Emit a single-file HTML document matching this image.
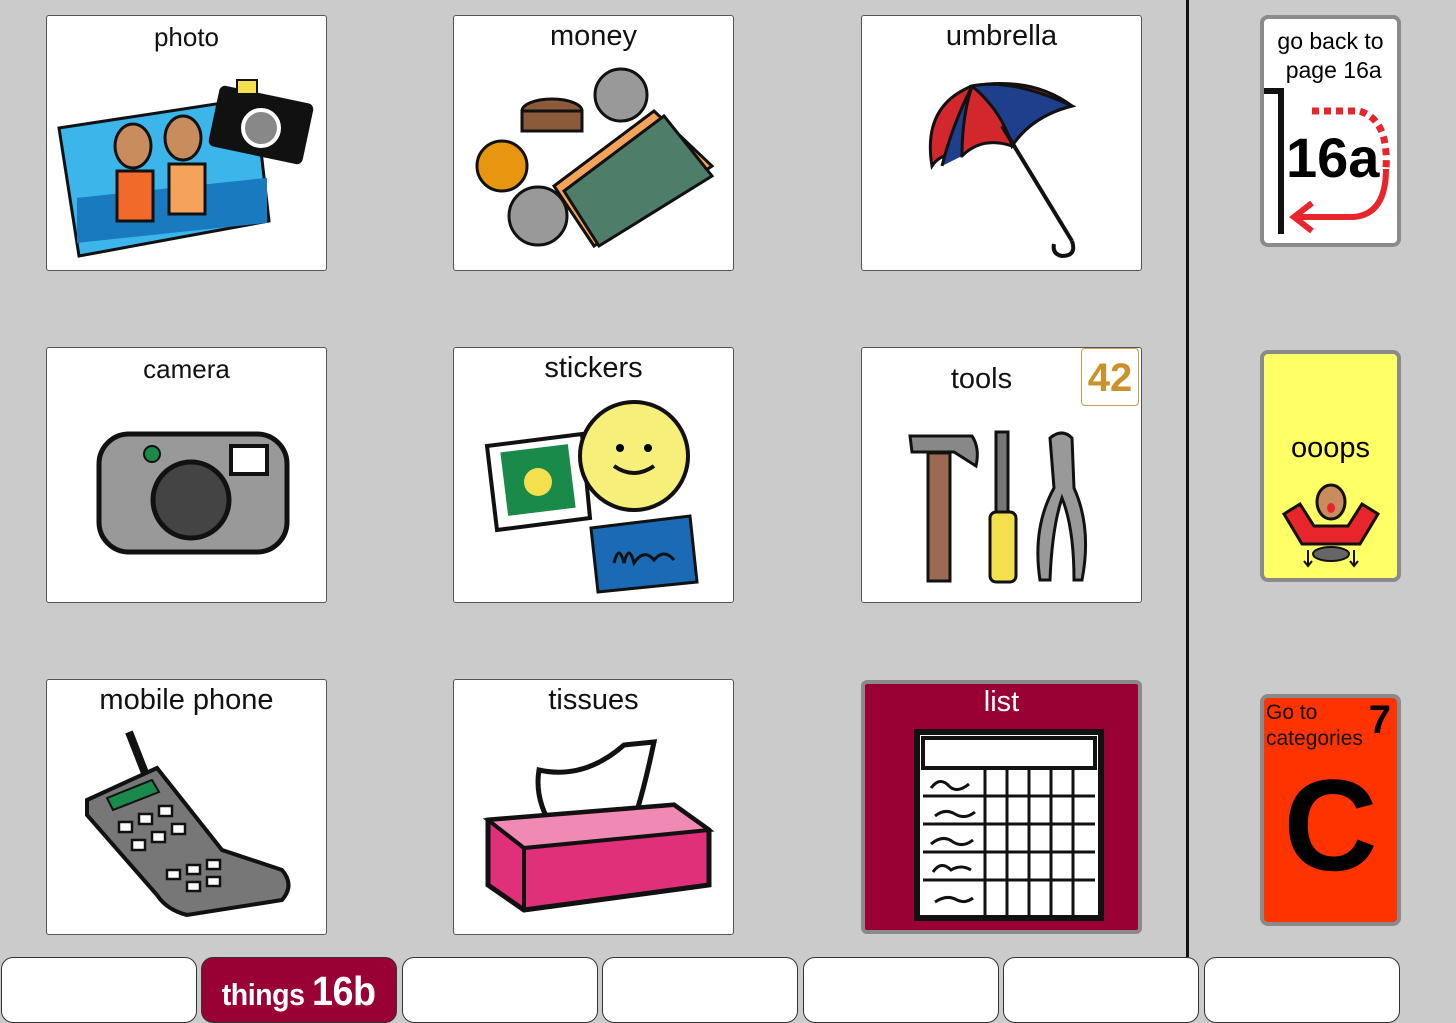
<!DOCTYPE html>
<html><head><meta charset="utf-8"><style>
*{margin:0;padding:0;box-sizing:border-box}
html,body{width:1456px;height:1023px;overflow:hidden}
body{background:#cbcbcb;position:relative;font-family:"Liberation Sans",sans-serif}
.c{position:absolute;width:281px;height:256px;background:#fff;border:1px solid #555;border-radius:3px}
.c .t{position:absolute;top:4px;left:0;right:0;text-align:center;font-size:29px;color:#111}
.c svg{position:absolute;left:0;top:0}
.r{position:absolute;left:1260px;width:141px;height:232px;border:4px solid #8a8a8a;border-radius:8px}
.tab{position:absolute;top:957px;width:196px;height:66px;background:#fff;border:1.5px solid #333;border-radius:12px}
</style></head><body>
<div style="position:absolute;left:1186px;top:0;width:3px;height:957px;background:#111"></div>

<div class="c" style="left:46px;top:15px"><div class="t" style="font-size:26px;top:6px">photo</div>
<svg width="281" height="256"><polygon points="12,112 208,82 222,205 32,240" fill="#3cb6ea" stroke="#111" stroke-width="3"/><rect x="30" y="185" width="190" height="45" fill="#1a7ac0" transform="skewY(-6)"/>
<ellipse cx="86" cy="130" rx="18" ry="22" fill="#c98c5c" stroke="#111" stroke-width="3"/><ellipse cx="136" cy="122" rx="18" ry="22" fill="#c98c5c" stroke="#111" stroke-width="3"/>
<rect x="70" y="155" width="36" height="50" fill="#f26a2a" stroke="#111" stroke-width="3"/><rect x="122" y="148" width="36" height="50" fill="#f5a35a" stroke="#111" stroke-width="3"/>
<rect x="166" y="78" width="96" height="62" rx="6" fill="#111" transform="rotate(12 214 109)"/><circle cx="214" cy="112" r="18" fill="#888" stroke="#fff" stroke-width="4"/><rect x="190" y="64" width="20" height="14" fill="#f4e04d" stroke="#111" stroke-width="2"/></svg></div>

<div class="c" style="left:453px;top:15px"><div class="t">money</div>
<svg width="281" height="256"><circle cx="167" cy="79" r="26" fill="#999" stroke="#111" stroke-width="3"/><ellipse cx="98" cy="95" rx="30" ry="12" fill="#8a5a3a" stroke="#111" stroke-width="3"/><rect x="68" y="95" width="60" height="20" fill="#8a5a3a" stroke="#111" stroke-width="3"/>
<circle cx="48" cy="150" r="25" fill="#e8960f" stroke="#111" stroke-width="3"/><polygon points="100,170 200,95 258,150 140,230" fill="#f5a35a" stroke="#111" stroke-width="3"/><polygon points="110,175 210,100 258,160 145,230" fill="#4e7d6a" stroke="#111" stroke-width="3"/><circle cx="84" cy="200" r="29" fill="#999" stroke="#111" stroke-width="3"/></svg></div>

<div class="c" style="left:861px;top:15px"><div class="t">umbrella</div>
<svg width="281" height="256"><path d="M70,150 Q60,90 110,70 Q170,60 210,90 Q170,100 150,130 Q120,120 100,140 Q80,135 70,150Z" fill="#d3272e" stroke="#111" stroke-width="3"/><path d="M110,70 Q150,62 210,90 Q170,100 150,130 Q140,95 110,70Z" fill="#1d3f8c" stroke="#111" stroke-width="3"/><path d="M100,140 Q100,100 110,70 Q90,110 80,150" fill="#1d3f8c" stroke="#111" stroke-width="3"/>
<line x1="140" y1="110" x2="210" y2="225" stroke="#111" stroke-width="4"/><path d="M210,225 Q215,240 200,240 Q190,238 192,228" fill="none" stroke="#111" stroke-width="4"/></svg></div>

<div class="c" style="left:46px;top:347px"><div class="t" style="font-size:26px;top:6px">camera</div>
<svg width="281" height="256"><rect x="52" y="86" width="188" height="118" rx="30" fill="#999" stroke="#111" stroke-width="5"/><circle cx="144" cy="152" r="38" fill="#444" stroke="#111" stroke-width="5"/><rect x="184" y="98" width="36" height="28" fill="#fff" stroke="#111" stroke-width="4"/><circle cx="105" cy="106" r="8" fill="#1a8a4a" stroke="#111" stroke-width="2"/></svg></div>

<div class="c" style="left:453px;top:347px"><div class="t">stickers</div>
<svg width="281" height="256"><polygon points="33,98 128,86 136,170 43,182" fill="#fff" stroke="#111" stroke-width="4"/><rect x="50" y="100" width="68" height="64" fill="#1a8a4a" transform="rotate(-7 84 132)"/><circle cx="84" cy="134" r="14" fill="#f4e04d"/>
<circle cx="180" cy="108" r="54" fill="#f6f07a" stroke="#111" stroke-width="4"/><circle cx="166" cy="100" r="4"/><circle cx="194" cy="100" r="4"/><path d="M160,118 Q180,132 200,118" fill="none" stroke="#111" stroke-width="4"/>
<polygon points="137,180 236,168 243,234 144,244" fill="#1a6ab5" stroke="#111" stroke-width="3"/><path d="M160,215 Q165,195 170,215 Q175,195 180,215 Q190,200 200,212 Q210,200 220,212" fill="none" stroke="#111" stroke-width="3"/></svg></div>

<div class="c" style="left:861px;top:347px"><div class="t" style="left:-40px;top:15px">tools</div>
<div style="position:absolute;right:2px;top:0;width:58px;height:58px;border:1px solid #c9a04a;border-radius:4px;color:#c9922c;font-size:40px;font-weight:bold;text-align:center;line-height:58px">42</div>
<svg width="281" height="256"><rect x="66" y="105" width="22" height="128" fill="#9a6b50" stroke="#111" stroke-width="3"/><path d="M48,88 L110,88 Q118,100 114,118 L92,104 L50,104Z" fill="#888" stroke="#111" stroke-width="3"/>
<rect x="134" y="84" width="12" height="80" fill="#777" stroke="#111" stroke-width="3"/><rect x="128" y="164" width="26" height="70" rx="6" fill="#f4e04d" stroke="#111" stroke-width="3"/>
<path d="M188,90 Q200,80 210,90 L212,140 Q230,180 220,232 L212,232 Q212,180 200,150 Q190,180 188,232 L178,232 Q170,180 192,140Z" fill="#999" stroke="#111" stroke-width="3"/></svg></div>

<div class="c" style="left:46px;top:679px"><div class="t">mobile phone</div>
<svg width="281" height="256"><line x1="82" y1="52" x2="100" y2="98" stroke="#111" stroke-width="8"/>
<path d="M40,120 L110,88 L175,170 L235,190 Q248,205 235,220 L140,235 Q120,230 110,215 L40,135Z" fill="#777" stroke="#111" stroke-width="4"/>
<polygon points="60,118 105,100 112,112 66,130" fill="#1a8a4a" stroke="#111" stroke-width="2"/>
<g fill="#fff" stroke="#111" stroke-width="2.5"><rect x="72" y="142" width="13" height="10"/><rect x="92" y="134" width="13" height="10"/><rect x="112" y="126" width="13" height="10"/>
<rect x="85" y="160" width="13" height="10"/><rect x="105" y="152" width="13" height="10"/><rect x="125" y="144" width="13" height="10"/>
<rect x="120" y="190" width="13" height="9"/><rect x="140" y="185" width="13" height="9"/><rect x="160" y="180" width="13" height="9"/><rect x="140" y="202" width="13" height="9"/><rect x="160" y="197" width="13" height="9"/></g></svg></div>

<div class="c" style="left:453px;top:679px"><div class="t">tissues</div>
<svg width="281" height="256"><path d="M85,90 Q130,100 170,65 L200,62 Q190,110 180,140 L100,150 Q80,120 85,90Z" fill="#fff" stroke="#111" stroke-width="5"/><polygon points="34,140 220,125 255,150 255,205 70,230 34,205" fill="#e0307a" stroke="#111" stroke-width="5"/><polygon points="34,140 220,125 255,150 70,168" fill="#f08ab5" stroke="#111" stroke-width="4"/><line x1="70" y1="168" x2="70" y2="230" stroke="#111" stroke-width="4"/></svg></div>

<div class="c" style="left:861px;top:680px;background:#990033;border:4px solid #8a8a8a;border-radius:6px;height:254px"><div class="t" style="color:#fff;top:2px">list</div>
<svg width="273" height="248"><rect x="52" y="48" width="184" height="186" fill="#fff" stroke="#111" stroke-width="6"/><rect x="58" y="54" width="172" height="30" fill="#fff" stroke="#111" stroke-width="4"/>
<g stroke="#111" stroke-width="3" fill="none"><line x1="58" y1="112" x2="230" y2="112"/><line x1="58" y1="140" x2="230" y2="140"/><line x1="58" y1="168" x2="230" y2="168"/><line x1="58" y1="196" x2="230" y2="196"/><line x1="120" y1="84" x2="120" y2="234"/><line x1="142" y1="84" x2="142" y2="234"/><line x1="164" y1="84" x2="164" y2="234"/><line x1="186" y1="84" x2="186" y2="234"/><line x1="208" y1="84" x2="208" y2="234"/>
<path d="M66,104 Q75,92 84,102 Q92,110 104,100"/><path d="M70,132 Q80,124 90,130 Q100,136 110,128"/><path d="M66,160 Q78,150 88,158 Q98,164 108,156"/><path d="M68,188 Q76,176 86,186 Q96,180 106,186"/><path d="M70,218 Q82,210 92,216 Q100,220 108,214"/></g></svg></div>

<div class="r" style="top:15px;background:#fff">
<div style="position:absolute;top:8px;left:0;right:0;text-align:center;font-size:23px;line-height:29px">go back to<br>&nbsp;page 16a</div>
<svg width="133" height="224" style="position:absolute;left:0;top:0"><path d="M0,72 L17,72 L17,215" fill="none" stroke="#111" stroke-width="6"/><path d="M48,92 L95,92 Q125,100 122,150" fill="none" stroke="#e8252a" stroke-width="7" stroke-dasharray="7 5"/><path d="M122,150 Q122,195 90,198 L35,198" fill="none" stroke="#e8252a" stroke-width="6"/><path d="M48,184 L30,198 L48,212" fill="none" stroke="#e8252a" stroke-width="6"/>
<text x="22" y="158" font-family="Liberation Sans" font-weight="bold" font-size="56">16a</text></svg></div>

<div class="r" style="top:350px;background:#ffff66">
<div style="position:absolute;top:78px;left:0;right:0;text-align:center;font-size:29px">ooops</div>
<svg width="133" height="224" style="position:absolute;left:0;top:0"><ellipse cx="67" cy="148" rx="14" ry="17" fill="#c98c5c" stroke="#111" stroke-width="3"/><ellipse cx="67" cy="154" rx="4" ry="5" fill="#e8252a"/><path d="M20,160 L36,150 L50,172 L84,172 L98,150 L114,160 L96,190 L38,190Z" fill="#e8252a" stroke="#111" stroke-width="3"/><ellipse cx="67" cy="200" rx="18" ry="7" fill="#666" stroke="#111" stroke-width="2"/><path d="M44,196 L44,212 M40,207 L44,212 L48,207 M90,196 L90,212 M86,207 L90,212 L94,207" stroke="#111" stroke-width="2" fill="none"/></svg></div>

<div class="r" style="top:694px;background:#ff3300">
<div style="position:absolute;top:2px;left:2px;font-size:21px;line-height:26px;color:#111">Go to<br>categories</div>
<div style="position:absolute;top:0;right:6px;font-size:40px;font-weight:bold">7</div>
<div style="position:absolute;top:52px;left:0;right:0;text-align:center;font-size:130px;font-weight:bold;line-height:150px">C</div></div>

<div class="tab" style="left:1px"></div>
<div class="tab" style="left:201px;background:#990033;color:#fff;font-weight:bold;font-size:31px;line-height:66px;text-align:center;letter-spacing:-0.5px"><span style="display:inline-block;transform:scaleX(0.92)">things <span style="font-size:41px">16b</span></span></div>
<div class="tab" style="left:402px"></div>
<div class="tab" style="left:602px"></div>
<div class="tab" style="left:803px"></div>
<div class="tab" style="left:1003px"></div>
<div class="tab" style="left:1204px"></div>
</body></html>
